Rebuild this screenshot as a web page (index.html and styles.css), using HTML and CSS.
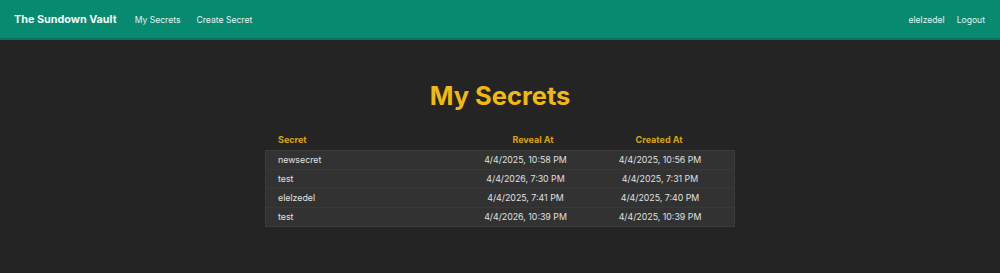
FILE: index.html
```html
<!DOCTYPE html>
<html lang="en">
<head>
<meta charset="utf-8">
<title>The Sundown Vault</title>
<link rel="stylesheet" href="styles.css">
</head>
<body>
<nav class="navbar">
  <div class="nav-left">
    <a class="brand" href="#">The Sundown Vault</a>
    <a class="nav-link" href="#">My Secrets</a>
    <a class="nav-link" href="#">Create Secret</a>
  </div>
  <div class="nav-right">
    <span class="nav-link">elelzedel</span>
    <a class="nav-link" href="#">Logout</a>
  </div>
</nav>
<main class="content">
  <h1 class="title">My Secrets</h1>
  <div class="secrets">
    <div class="thead">
      <div class="th th-secret">Secret</div>
      <div class="th th-reveal">Reveal At</div>
      <div class="th th-created">Created At</div>
    </div>
    <div class="tbody">
      <div class="row"><div class="td td-secret">newsecret</div><div class="td">4/4/2025, 10:58 PM</div><div class="td td-created">4/4/2025, 10:56 PM</div></div>
      <div class="row"><div class="td td-secret">test</div><div class="td">4/4/2026, 7:30 PM</div><div class="td td-created">4/4/2025, 7:31 PM</div></div>
      <div class="row"><div class="td td-secret">elelzedel</div><div class="td">4/4/2025, 7:41 PM</div><div class="td td-created">4/4/2025, 7:40 PM</div></div>
      <div class="row"><div class="td td-secret">test</div><div class="td">4/4/2026, 10:39 PM</div><div class="td td-created">4/4/2025, 10:39 PM</div></div>
    </div>
  </div>
</main>
</body>
</html>
```
FILE: styles.css
```css
* { box-sizing: border-box; }
html, body { margin: 0; padding: 0; }
body {
  background: #242424;
  font-family: Inter, "DejaVu Sans", sans-serif;
  color: #e2e2e2;
  height: 273px;
  overflow: hidden;
}
a { text-decoration: none; color: inherit; }

.navbar {
  height: 40px;
  background: #078a70;
  border-bottom: 2px solid #06735e;
  display: flex;
  align-items: center;
  justify-content: space-between;
  padding: 1px 15px 0 14px;
}
.nav-left, .nav-right { display: flex; align-items: center; }
.brand {
  font-weight: 700;
  font-size: 10.8px;
  color: #f4fbf9;
  margin-right: 18px;
}
.nav-link {
  font-size: 8.6px;
  color: #e3f3ee;
  margin-right: 16px;
}
.nav-right .nav-link { margin-right: 12px; }
.nav-right .nav-link:last-child { margin-right: 0; }

.content {
  display: flex;
  flex-direction: column;
  align-items: center;
  padding-top: 40px;
}
.title {
  margin: 0;
  font-size: 25.5px;
  line-height: 32px;
  font-weight: 700;
  color: #f2b90d;
}
.secrets {
  width: 470px;
  margin-top: 16px;
}
.thead, .row {
  display: grid;
  grid-template-columns: 194px 131px 145px;
}
.thead { height: 22px; align-items: center; }
.th {
  font-size: 9px;
  font-weight: 700;
  color: #d9a50b;
  text-align: center;
}
.th-secret { text-align: left; padding-left: 13px; }
.th-reveal { padding-left: 17px; }
.th-created, .td-created { padding-right: 7px; }
.tbody {
  background: #323232;
  border: 1px solid #3b3b3b;
}
.row {
  height: 19px;
  align-items: center;
  border-top: 1px solid #383838;
  padding-bottom: 1px;
}
.row:first-child { border-top: none; height: 18px; }
.td {
  font-size: 8.8px;
  color: #e0e0e0;
  text-align: center;
}
.td-secret { text-align: left; padding-left: 12px; }
```
